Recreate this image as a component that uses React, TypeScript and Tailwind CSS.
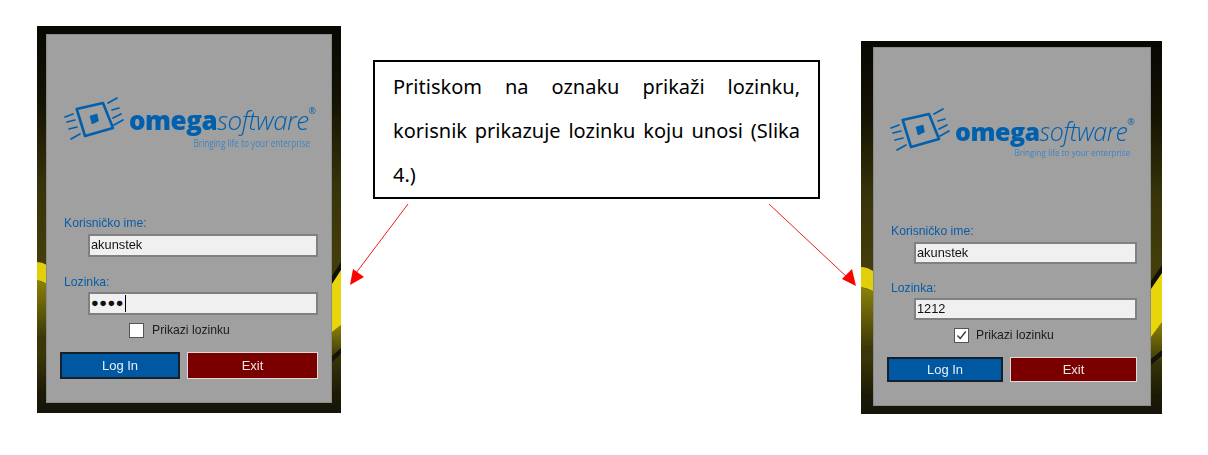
import React from "react";

const formFont = { fontFamily: '"Liberation Sans", Arial, sans-serif' };

type Shape = { d: string; fill: string };

function Backdrop({ id, w, h, shapes }: { id: string; w: number; h: number; shapes: Shape[] }) {
  return (
    <svg className="absolute inset-0" width={w} height={h} viewBox={`0 0 ${w} ${h}`}>
      <defs>
        <linearGradient id={id} x1="0" y1="0" x2="0" y2="1">
          <stop offset="0" stopColor="#080703" />
          <stop offset="0.2" stopColor="#151303" />
          <stop offset="0.42" stopColor="#38340a" />
          <stop offset="0.6" stopColor="#423d0a" />
          <stop offset="0.85" stopColor="#3a3608" />
          <stop offset="0.95" stopColor="#1c1a06" />
          <stop offset="1" stopColor="#16140a" />
        </linearGradient>
        <linearGradient id={`${id}-olive`} x1="0" y1="0" x2="0" y2="1">
          <stop offset="0" stopColor="#8c8208" />
          <stop offset="1" stopColor="#3e3a08" />
        </linearGradient>
      </defs>
      <rect width={w} height={h} fill={`url(#${id})`} />
      {shapes.map((s, i) => (
        <path key={i} d={s.d} fill={s.fill === "olive" ? `url(#${id}-olive)` : s.fill} />
      ))}
    </svg>
  );
}

function LogoMark() {
  return (
    <svg width="60" height="44" viewBox="0 0 60 44" className="shrink-0 overflow-visible" fill="none" stroke="#0060ae">
      <path d="M12.7 12 L39 6 L49 31 L21 39 Z" strokeWidth="2.6" strokeLinejoin="round" />
      <path d="M26 19 L33 17 L34.5 24 L28 27 Z" fill="#0060ae" strokeWidth="0.6" />
      <g strokeWidth="1.7" strokeLinecap="round">
        <path d="M44 6 L53 1" />
        <path d="M48 13 L55 11" />
        <path d="M49 21 L57 17" />
        <path d="M50 28 L59 23" />
        <path d="M1 20 L9 17" />
        <path d="M3 25 L11 23" />
        <path d="M5 32 L13 30" />
        <path d="M7 42 L16 37" />
      </g>
    </svg>
  );
}

function Logo({ className, wordClass, tagClass }: { className: string; wordClass: string; tagClass: string }) {
  return (
    <div className={`flex items-start blur-[0.35px] ${className}`}>
      <LogoMark />
      <div className="ml-[5px] flex flex-col items-end pt-[8px]">
        <div className={`flex items-baseline text-[#0060ae] ${wordClass}`} style={{ fontFamily: '"Open Sans", sans-serif' }}>
          <span className="font-extrabold tracking-[-0.5px]">omega</span>
          <span className="italic font-light tracking-[-0.6px]">software</span>
          <span className="self-start text-[9px] leading-[12px]">®</span>
        </div>
        <div className={`mt-[2px] origin-right text-[#3f83c2] leading-[10px] whitespace-nowrap ${tagClass}`} style={{ fontFamily: '"Open Sans", sans-serif' }}>
          Bringing life to your enterprise
        </div>
      </div>
    </div>
  );
}

function Field({ value, className, children }: { value?: string; className: string; children?: React.ReactNode }) {
  return (
    <div className={`flex items-center border-2 border-[#808080] bg-[#f0f0f0] text-[12.8px] text-[#111] ${className}`}>
      {value}
      {children}
    </div>
  );
}

export default function App() {
  return (
    <div className="relative flex h-[455px] w-[1208px] items-start overflow-hidden bg-white pl-[37px]" style={formFont}>
      {/* left window */}
      <div className="relative mt-[26px] h-[387px] w-[304px] shrink-0 pl-[9px] pt-[8px]">
        <Backdrop
          id="gl"
          w={304}
          h={387}
          shapes={[
            { d: "M0 254 L10 258 L10 310 L0 310 Z", fill: "olive" },
            { d: "M0 236 Q5 236 10 239 L10 258 Q5 255 0 254 Z", fill: "#e0cf0a" },
            { d: "M295 250 L304 236 L304 244 L295 258 Z", fill: "#12100a" },
            { d: "M295 306 L304 299 L304 330 L295 330 Z", fill: "olive" },
            { d: "M295 258 L304 244 L304 299 L295 306 Z", fill: "#e8d60c" },
            { d: "M295 330 L304 322 L304 328 L295 336 Z", fill: "#15130a" },
          ]}
        />
        <div className="relative flex h-[369px] w-[286px] flex-col border border-[#8b8b8b] bg-[#a0a0a0] text-[12.2px] leading-none">
          <Logo className="ml-[17px] mt-[62px]" wordClass="text-[26px] leading-[31px]" tagClass="text-[10px] scale-x-[0.82] mr-[6px]" />
          <div className="mt-[68px] h-[15px] pl-[17px] leading-[15px] text-[#0a5ca6] blur-[0.25px]">Korisničko ime:</div>
          <Field value="akunstek" className="ml-[41px] mt-[3px] h-[23px] w-[230px] pl-px blur-[0.25px]" />
          <div className="mt-[18px] h-[15px] pl-[17px] leading-[15px] text-[#0a5ca6] blur-[0.25px]">Lozinka:</div>
          <Field className="ml-[41px] mt-[2px] h-[23px] w-[230px] pl-px">
            <span className="tracking-[0.5px]">●●●●</span>
            <span className="ml-px h-[17px] w-px bg-black" />
          </Field>
          <div className="ml-[82px] mt-[8px] flex h-[15px] items-center gap-[8px] text-[#1c1c1c] blur-[0.25px]">
            <span className="h-[15px] w-[15px] border border-[#555] bg-white" />
            Prikazi lozinku
          </div>
          <div className="ml-[13px] mt-[14px] flex gap-[7px] text-[13px]">
            <div className="flex h-[27px] w-[120px] items-center justify-center border-2 border-[#14202c] bg-[#0058a3] text-[#e8eef5] blur-[0.2px]">Log In</div>
            <div className="flex h-[27px] w-[131px] items-center justify-center border border-[#e2dada] bg-[#7a0000] text-[#efe6e6] blur-[0.2px]">Exit</div>
          </div>
        </div>
      </div>

      {/* callout */}
      <div
        className="ml-[32px] mt-[60px] h-[139px] w-[447px] shrink-0 border-2 border-black px-[18px] py-[3px] text-justify text-[20px] leading-[44px] text-black"
        style={{ fontFamily: '"Noto Sans", sans-serif' }}
      >
        Pritiskom na oznaku prikaži lozinku, korisnik prikazuje lozinku koju unosi (Slika 4.)
      </div>

      {/* right window */}
      <div className="relative ml-[41px] mt-[41px] h-[373px] w-[301px] shrink-0 pl-[12px] pt-[6px]">
        <Backdrop
          id="gr"
          w={301}
          h={373}
          shapes={[
            { d: "M0 246 L12 250 L12 305 L0 305 Z", fill: "olive" },
            { d: "M0 226 Q6 226 12 230 L12 250 Q6 247 0 246 Z", fill: "#e0cf0a" },
            { d: "M290 240 L301 224 L301 232 L290 248 Z", fill: "#12100a" },
            { d: "M290 296 L301 281 L301 320 L290 320 Z", fill: "olive" },
            { d: "M290 248 L301 232 L301 281 L290 296 Z", fill: "#e8d60c" },
            { d: "M290 318 L301 309 L301 315 L290 324 Z", fill: "#15130a" },
          ]}
        />
        <div className="relative flex h-[359px] w-[278px] flex-col border border-[#8b8b8b] bg-[#a0a0a0] text-[12.2px] leading-none">
          <Logo className="ml-[16px] mt-[60px]" wordClass="text-[25px] leading-[30px]" tagClass="text-[9.6px] scale-x-[0.85] mr-[4px]" />
          <div className="mt-[66px] h-[15px] pl-[17px] leading-[15px] text-[#0a5ca6] blur-[0.25px]">Korisničko ime:</div>
          <Field value="akunstek" className="ml-[40px] mt-[3px] h-[22px] w-[223px] pl-px blur-[0.25px]" />
          <div className="mt-[17px] h-[15px] pl-[17px] leading-[15px] text-[#0a5ca6] blur-[0.25px]">Lozinka:</div>
          <Field value="1212" className="ml-[40px] mt-[2px] h-[22px] w-[223px] pl-px blur-[0.25px]" />
          <div className="ml-[80px] mt-[8px] flex h-[15px] items-center gap-[7px] text-[#1c1c1c] blur-[0.25px]">
            <span className="flex h-[15px] w-[15px] items-center justify-center border border-[#555] bg-white">
              <svg width="11" height="11" viewBox="0 0 11 11" fill="none" stroke="#333" strokeWidth="1.3">
                <path d="M1.5 5.5 L4.2 8.5 L9.8 1.5" />
              </svg>
            </span>
            Prikazi lozinku
          </div>
          <div className="ml-[13px] mt-[14px] flex gap-[7px] text-[13px]">
            <div className="flex h-[25px] w-[116px] items-center justify-center border-2 border-[#14202c] bg-[#0058a3] text-[#e8eef5] blur-[0.2px]">Log In</div>
            <div className="flex h-[25px] w-[127px] items-center justify-center border border-[#e2dada] bg-[#7a0000] text-[#efe6e6] blur-[0.2px]">Exit</div>
          </div>
        </div>
      </div>

      {/* red arrows */}
      <svg className="pointer-events-none absolute inset-0" width="1208" height="455" viewBox="0 0 1208 455">
        <path d="M408 204 L356 273" stroke="#f21a1a" strokeWidth="1" />
        <path d="M350 285 L353 269 L364 277 Z" fill="#ff0000" />
        <path d="M769 204 L849 279" stroke="#f21a1a" strokeWidth="1" />
        <path d="M856 286 L842 279 L852 269 Z" fill="#ff0000" />
      </svg>
    </div>
  );
}
